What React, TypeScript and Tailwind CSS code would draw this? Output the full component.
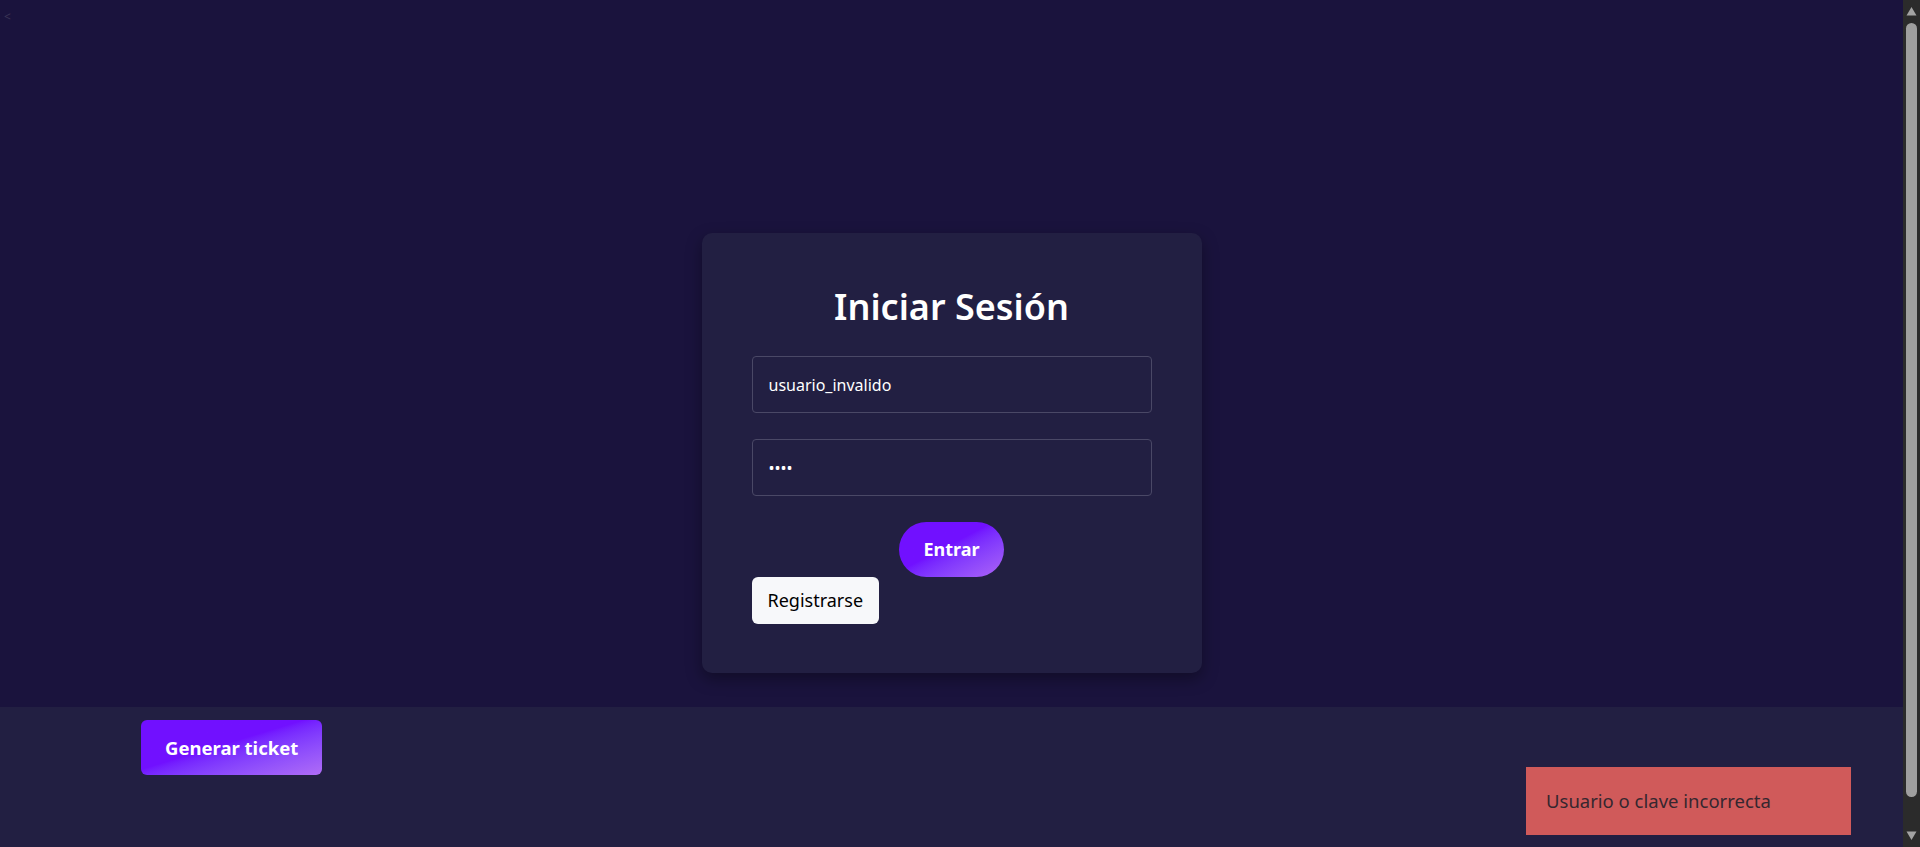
export default function App() {
  return (
    <div className="flex h-screen overflow-hidden bg-[#1a133d] font-['Noto_Sans',sans-serif] text-white">
      <div className="relative flex-1 overflow-hidden">
        <main className="relative flex h-[707px] justify-center pt-[233px]">
          <span className="absolute left-[4px] top-[8px] text-[12px] text-[#3b3555]">&lt;</span>

          <div className="flex h-fit w-[500px] flex-col rounded-[10px] bg-[#221f42] px-[50px] pb-[49px] pt-[50px] shadow-[0_6px_16px_rgba(0,0,0,0.35)]">
            <h2 className="mb-[25px] text-center text-[36px] font-semibold leading-[48px]">Iniciar Sesión</h2>

            <input
              type="text"
              defaultValue="usuario_invalido"
              className="h-[57px] w-full rounded-[4px] border border-[#4a4866] bg-transparent px-4 text-[16px] text-white outline-none"
            />
            <input
              type="password"
              defaultValue="1234"
              className="mt-[26px] h-[57px] w-full rounded-[4px] border border-[#4a4866] bg-transparent px-4 text-[16px] text-white outline-none"
            />

            <button className="mt-[26px] h-[55px] self-center rounded-full bg-gradient-to-br from-[#7110ff] from-45% to-[#ad62f6] px-6 text-[18px] font-bold text-white">
              Entrar
            </button>
            <button className="h-[47px] self-start rounded-[6px] bg-[#f7f8fa] px-4 text-[18px] text-black">
              Registrarse
            </button>
          </div>
        </main>

        <footer className="h-[183px] bg-[#221f42] pl-[141px] pt-[13px]">
          <button className="h-[55px] rounded-[6px] bg-gradient-to-br from-[#7110ff] from-45% to-[#b06cf6] px-6 text-[18.5px] font-bold text-white">
            Generar ticket
          </button>
        </footer>

        <div className="absolute bottom-[12px] right-[52px] flex h-[68px] w-[325px] items-center bg-[#d05a5a] pl-5 text-[18.5px] text-[#35272f]">
          Usuario o clave incorrecta
        </div>
      </div>

      {/* page scrollbar */}
      <div className="flex w-[17px] flex-col items-center bg-[#2b2b2b]">
        <svg width="13" height="17" viewBox="0 0 13 17" className="mt-[2px]">
          <path d="M1.5 13.5 L6.5 5 L11.5 13.5 Z" fill="#a3a3a3" />
        </svg>
        <div className="mt-[4px] h-[774px] w-[11px] rounded-full bg-[#9f9f9f]" />
        <div className="flex-1" />
        <svg width="13" height="17" viewBox="0 0 13 17" className="mb-[2px]">
          <path d="M1.5 3.5 L6.5 12 L11.5 3.5 Z" fill="#a3a3a3" />
        </svg>
      </div>
    </div>
  );
}
